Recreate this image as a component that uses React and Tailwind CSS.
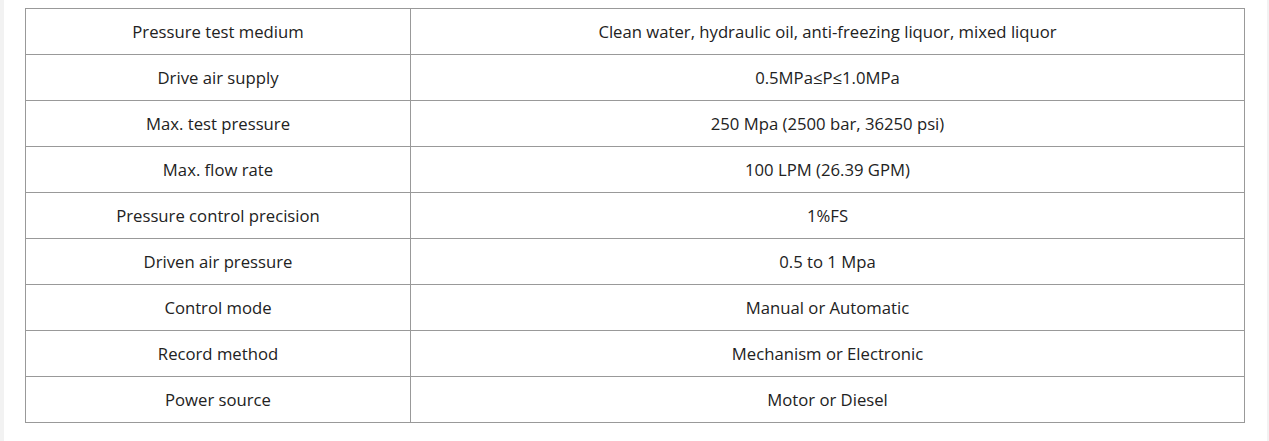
const rows = [
  ["Pressure test medium", "Clean water, hydraulic oil, anti-freezing liquor, mixed liquor"],
  ["Drive air supply", "0.5MPa≤P≤1.0MPa"],
  ["Max. test pressure", "250 Mpa (2500 bar, 36250 psi)"],
  ["Max. flow rate", "100 LPM (26.39 GPM)"],
  ["Pressure control precision", "1%FS"],
  ["Driven air pressure", "0.5 to 1 Mpa"],
  ["Control mode", "Manual or Automatic"],
  ["Record method", "Mechanism or Electronic"],
  ["Power source", "Motor or Diesel"],
];

const App = () => {
  return (
    <div className="flex w-[1269px] h-[441px] bg-[#f2f2f2]">
      <div className="ml-[4px] mr-[2px] flex-1 bg-white pt-[8px] pl-[21px]">
        <div
          className="grid w-[1220px] grid-cols-[385px_834px] border-l border-t border-[#999999] text-[16.7px] text-[#222222]"
          style={{ fontFamily: '"Open Sans", "Noto Sans", sans-serif' }}
        >
          {rows.map(([label, value]) => (
            <div key={label} className="contents">
              <div className="flex h-[46px] items-center justify-center border-r border-b border-[#999999]">
                {label}
              </div>
              <div className="flex h-[46px] items-center justify-center border-r border-b border-[#999999]">
                {value}
              </div>
            </div>
          ))}
        </div>
      </div>
    </div>
  );
};

export default App;
